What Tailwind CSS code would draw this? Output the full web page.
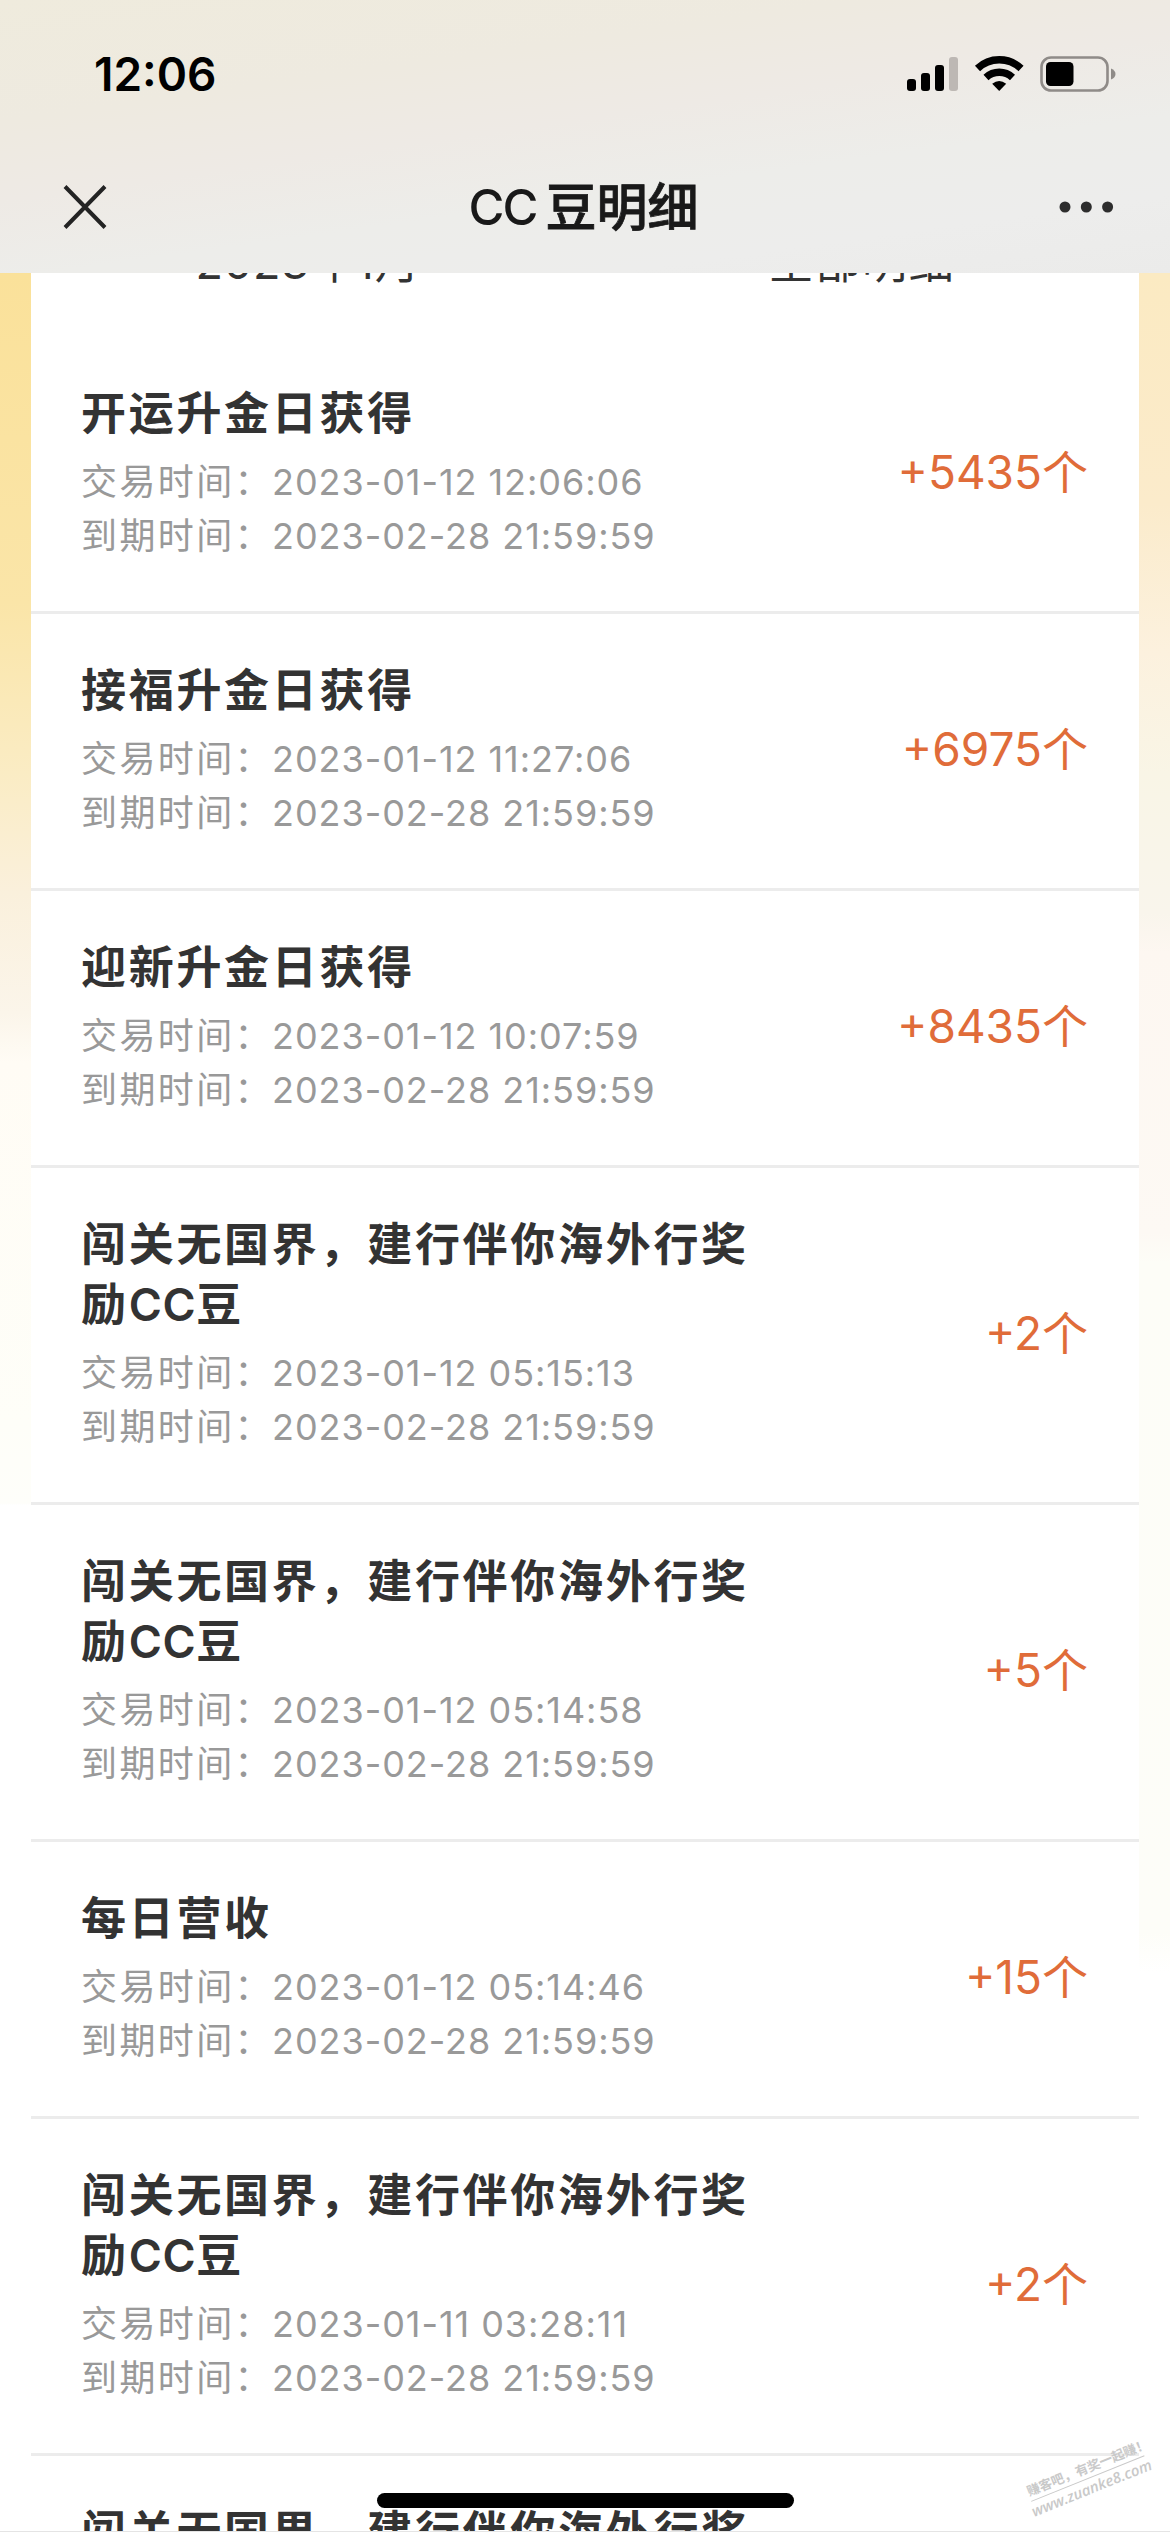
<!DOCTYPE html>
<html lang="zh-CN">
<head>
<meta charset="utf-8">
<title>CC豆明细</title>
<script src="https://cdn.jsdelivr.net/npm/@tailwindcss/browser@4"></script>
</head>
<body class="bg-white">
<div class="relative flex h-[2532px] w-[1170px] flex-col overflow-hidden font-['Inter','Noto_Sans_CJK_SC',sans-serif]">
  <header class="flex h-[273px] shrink-0 flex-col bg-[linear-gradient(172deg,#efebdd_0%,#eeeae0_28%,#eeeae5_46%,#ededea_64%,#ededec_82%,#ebebea_100%)]">
    <div class="flex h-[148px] items-center justify-between pr-[54px] pl-[94px]">
      <div class="text-[46px] leading-none font-semibold tracking-[0px] text-black">12:06</div>
      <svg class="h-[40px] w-[210px]" viewBox="906 54 210 40">
        <g>
          <rect x="907" y="79" width="9" height="12" rx="3"/><rect x="921" y="73" width="9" height="18" rx="3"/><rect x="935" y="65" width="9" height="26" rx="3"/><rect x="949" y="57" width="9" height="34" rx="3" fill="#bdb8b4"/>
        </g>
        <g fill="none" stroke="#000" stroke-width="7.4">
          <path d="M977.5 68.5a31.5 31.5 0 0 1 43.500 0"/><path d="M986 77.500a19.500 19.500 0 0 1 26.500 0"/>
        </g>
        <path d="M999.200 91l-7-7.200q7-5.400 14 0z"/>
        <rect x="1041.500" y="57.500" width="66" height="33" rx="9.500" fill="none" stroke="#8f8b88" stroke-width="2.600"/>
        <rect x="1046" y="62" width="27.500" height="24" rx="4.500"/>
        <path d="M1111 68.500q4.500 2 4.500 5.500t-4.500 5.500z" fill="#8f8b88"/>
      </svg>
    </div>
    <nav class="flex h-[118px] items-center justify-between pr-[56px] pl-[62px]">
      <svg class="size-[46px]" viewBox="0 0 46 46"><path d="M3 2.500l40 41M43 2.500l-40 41" stroke="#232323" stroke-width="4" fill="none"/></svg>
      <h1 class="flex gap-[9px] text-[51px] leading-none font-medium text-[#191919]"><span class="text-[49px] leading-[51px] tracking-[-2px]">CC</span><span class="font-medium [-webkit-text-stroke:0.8px_#191919]">豆明细</span></h1>
      <svg class="h-[12px] w-[55px]" viewBox="0 0 55 12" fill="#2d2d2d"><circle cx="6" cy="6" r="5.500"/><circle cx="27.300" cy="6" r="5.500"/><circle cx="48.600" cy="6" r="5.500"/></svg>
    </nav>
  </header>
  <div class="flex flex-1 overflow-hidden">
    <div class="w-[31px] shrink-0 bg-[linear-gradient(to_bottom,#fae19a_0px,#fae5a8_330px,#faecc4_500px,#faf0dc_620px,#fbf5ea_740px,#fffcf5_790px,#fefef8_1150px,#fefefa_1230px,#ffffff_1232px)]"></div>
    <main class="flex w-[1108px] shrink-0 flex-col bg-white">
      <div class="h-[64px] shrink-0 overflow-hidden">
        <div class="mt-[-40px] flex h-[60px] text-[45px] leading-[60px] text-[#333]">
          <div class="w-1/2 text-center tracking-[0.800px]">2023年1月</div><div class="w-1/2 text-center tracking-[1.700px]">全部明细</div>
        </div>
      </div>
      <div id="list" class="flex flex-col"></div>
    </main>
    <div class="w-[31px] shrink-0 bg-[linear-gradient(to_bottom,#fbeac2_0px,#fbebcb_230px,#fcf1de_380px,#f9f5e6_500px,#f9f5ec_640px,#fdf7f1_680px,#fdf9f4_960px,#fdfdf7_990px,#fdfdf8_1660px,#ffffff_1700px)]"></div>
  </div>
  <div class="absolute bottom-0 left-0 h-px w-full bg-[#e4e4e4]"></div>
  <div class="absolute top-[2493px] left-[377px] h-[15px] w-[417px] rounded-full bg-black"></div>
  <div class="absolute top-[2460px] left-[1023px] flex w-[130px] -rotate-[22deg] flex-col items-center font-bold whitespace-nowrap text-[#c9c9c9]">
    <div class="w-[122px] border-b border-[#c9c9c9] pb-px text-[13px] leading-[17px]">赚客吧，有奖一起赚！</div>
    <div class="font-['Open_Sans',sans-serif] text-[15px] leading-[19px] font-semibold italic">www.zuanke8.com</div>
  </div>
</div>
<script>
const two = '闯关无国界，建行伴你海外行奖励CC豆';
const items = [
  ['开运升金日获得', '2023-01-12 12:06:06', 5435],
  ['接福升金日获得', '2023-01-12 11:27:06', 6975],
  ['迎新升金日获得', '2023-01-12 10:07:59', 8435],
  [two, '2023-01-12 05:15:13', 2],
  [two, '2023-01-12 05:14:58', 5],
  ['每日营收', '2023-01-12 05:14:46', 15],
  [two, '2023-01-11 03:28:11', 2]
];
const heading = title => `<h2 class="mb-[11px] w-[680px] text-[45px] leading-[60px] font-semibold tracking-[2.700px] text-[#333]">${title.replace('CC', '<span class="tracking-[0.600px]">CC</span>')}</h2>`;
const line = (label, time) => `<p class="flex text-[36px] leading-[54px] whitespace-nowrap text-[#999]"><span class="w-[191px] tracking-[2.400px]">${label}：</span><span class="tracking-[0.950px]">${time}</span></p>`;
document.getElementById('list').innerHTML = items.map(([title, time, n]) => `
<div class="flex shrink-0 items-center justify-between border-b-[3px] border-[#ececec] pt-[47px] pr-[51px] pb-[48px] pl-[50px]">
  <div>
    ${heading(title)}
    ${line('交易时间', time)}
    ${line('到期时间', '2023-02-28 21:59:59')}
  </div>
  <div class="mt-[-3px] text-[46px] leading-[60px] text-[#e06c39]">+${n}个</div>
</div>`).join('') + `<div class="pt-[47px] pl-[50px]">${heading('闯关无国界，建行伴你海外行奖')}</div>`;
</script>
</body>
</html>
